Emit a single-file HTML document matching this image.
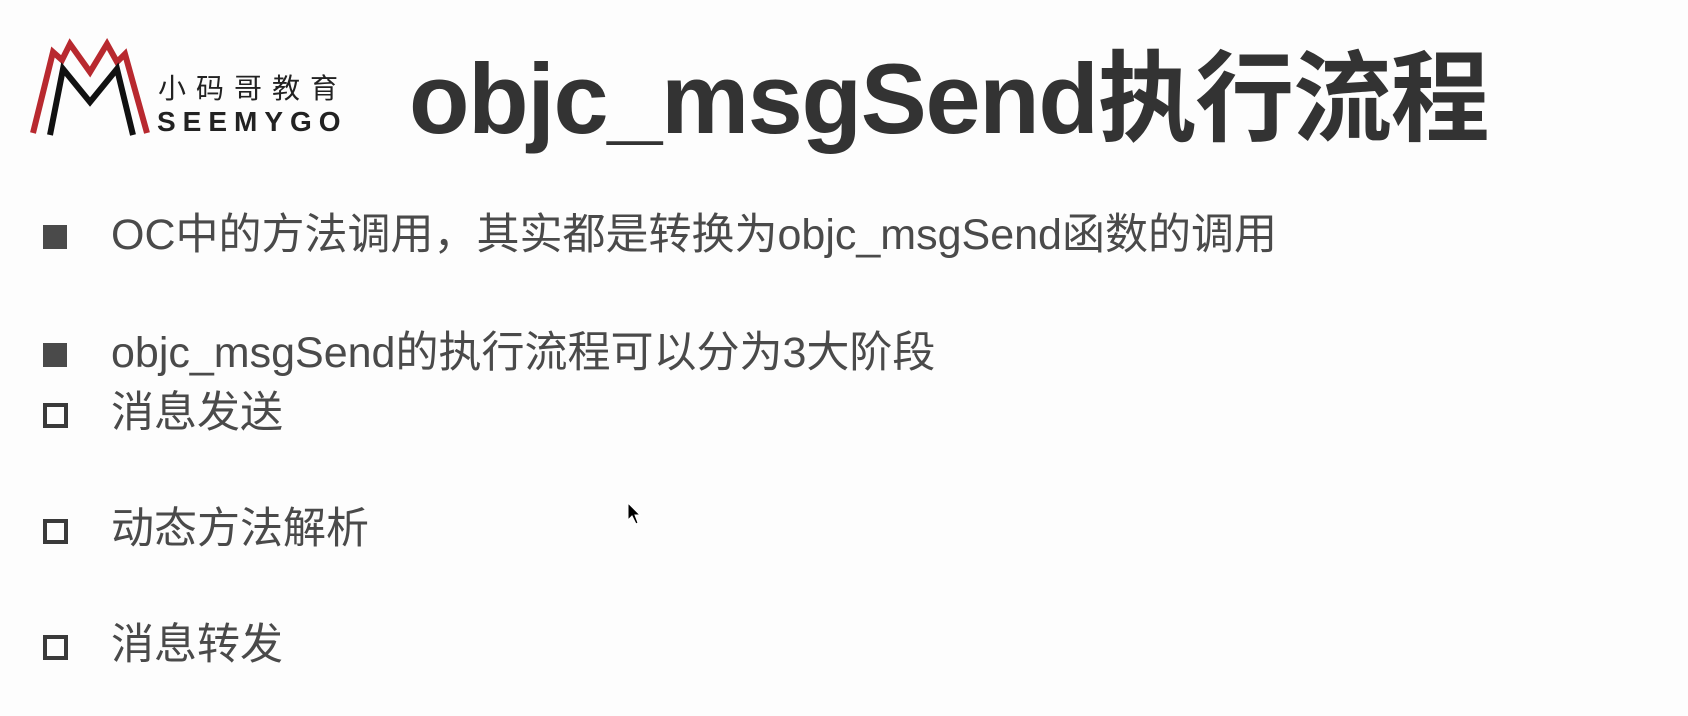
<!DOCTYPE html>
<html><head><meta charset="utf-8"><style>
body{margin:0;width:1688px;height:716px;background:#fdfdfd;overflow:hidden;position:relative;font-family:"Liberation Sans","Noto Sans CJK SC",sans-serif;}
.t{position:absolute;left:409px;top:18px;font-size:99px;font-weight:bold;color:#333;white-space:nowrap;letter-spacing:-1.3px}
.l{position:absolute;left:111px;font-size:43px;color:#4a4a4a;white-space:nowrap;line-height:1}
.b{position:absolute;left:43px;width:24px;height:24px;background:#4a4a4a}
.h{position:absolute;left:43px;width:17px;height:17px;border:4px solid #3a3a3a}
</style></head><body>
<svg style="position:absolute;left:0;top:2px" width="160" height="150" viewBox="0 0 160 150">
<polyline points="33,131 53,50 62,58 70,42 90,70 107,42 117,60 125,52 147,131" fill="none" stroke="#b8292f" stroke-width="6"/>
<polyline points="50,133 63,67 90,100 117,67 133,133" fill="none" stroke="#111" stroke-width="6"/>
</svg>
<div style="position:absolute;left:158px;top:75px;font-size:28px;color:#222;letter-spacing:10px;line-height:1">小码哥教育</div>
<div style="position:absolute;left:157px;top:108px;font-size:28px;font-weight:bold;color:#222;letter-spacing:7px;line-height:1">SEEMYGO</div>
<div class="t">objc_msgSend执行流程</div>
<div class="b" style="top:225px"></div><div class="l" style="top:214px">OC中的方法调用，其实都是转换为objc_msgSend函数的调用</div>
<div class="b" style="top:343px"></div><div class="l" style="top:332px">objc_msgSend的执行流程可以分为3大阶段</div>
<div class="h" style="top:403px"></div><div class="l" style="top:392px">消息发送</div>
<div class="h" style="top:519px"></div><div class="l" style="top:508px">动态方法解析</div>
<div class="h" style="top:635px"></div><div class="l" style="top:624px">消息转发</div>
<svg style="position:absolute;left:627px;top:502px" width="16" height="26"><path d="M1,1 L1,18 L5,14 L9,22 L11,21 L8,13 L13,13 Z" fill="#000" stroke="#fff" stroke-width="1"/></svg>
</body></html>
